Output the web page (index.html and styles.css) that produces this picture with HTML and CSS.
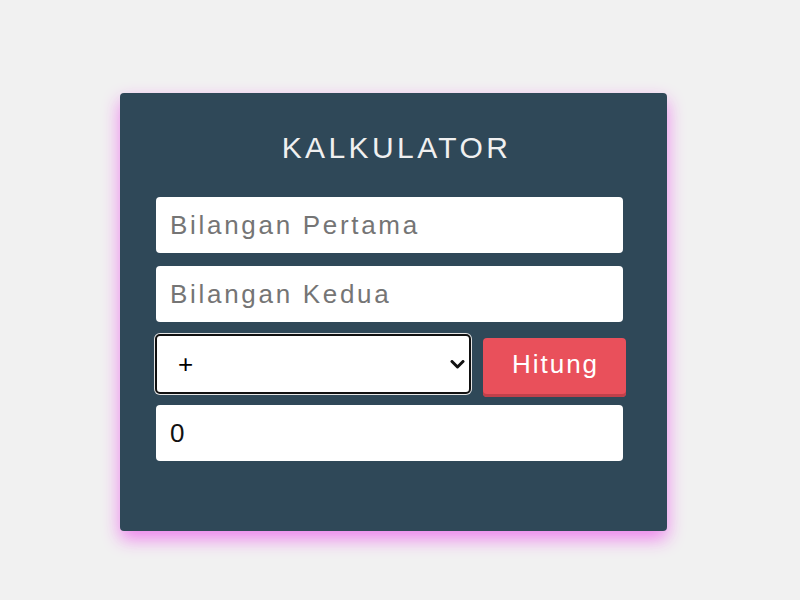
FILE: index.html
```html
<!DOCTYPE html>
<html>
<head>
<meta charset="utf-8">
<link rel="stylesheet" href="styles.css">
</head>
<body>
<div class="card">
  <h2 class="title">KALKULATOR</h2>
  <input class="field" type="text" placeholder="Bilangan Pertama">
  <input class="field" type="text" placeholder="Bilangan Kedua">
  <div class="row">
    <select class="op">
      <option>+</option>
      <option>-</option>
      <option>*</option>
      <option>/</option>
    </select>
    <button class="btn">Hitung</button>
  </div>
  <input class="field result" type="text" value="0">
</div>
</body>
</html>
```
FILE: styles.css
```css
html, body {
  margin: 0;
  padding: 0;
}
body {
  background: #f1f1f1;
  font-family: "Liberation Sans", Arial, sans-serif;
  padding: 93px 0 0 120px;
  height: 600px;
  box-sizing: border-box;
}
.card {
  width: 547px;
  height: 438px;
  box-sizing: border-box;
  background: #2f4858;
  border-radius: 4px;
  padding: 38px 0 0 36px;
  box-shadow: 0 8px 18px violet;
  display: flex;
  flex-direction: column;
}
.title {
  margin: 0 0 32px 0;
  padding-left: 3px;
  width: 475px;
  text-align: center;
  font-weight: normal;
  font-size: 30px;
  letter-spacing: 3.4px;
  line-height: 34px;
  color: #f0f0f0;
}
.field {
  width: 467px;
  height: 56px;
  box-sizing: border-box;
  border: none;
  border-radius: 4px;
  background: #fff;
  padding: 0 14px;
  font-family: "Liberation Sans", Arial, sans-serif;
  font-size: 26px;
  letter-spacing: 2.7px;
  color: #111;
  margin: 0 0 13px 0;
  outline: none;
}
.field::placeholder {
  color: #757575;
}
.row {
  display: flex;
  align-items: flex-start;
  margin: -2px 0 8px -1px;
}
.op {
  -webkit-appearance: none;
  appearance: none;
  width: 316px;
  height: 60px;
  box-sizing: border-box;
  border: 2px solid #111;
  border-radius: 5px;
  box-shadow: 0 0 0 1px #e6e6e6;
  background: #fff url("data:image/svg+xml,%3Csvg xmlns='http://www.w3.org/2000/svg' width='15' height='9' viewBox='0 0 15 9'%3E%3Cpath d='M2 1.5 L7.5 7 L13 1.5' fill='none' stroke='%23111' stroke-width='3' stroke-linecap='round' stroke-linejoin='round'/%3E%3C/svg%3E") no-repeat right 4px center;
  font-family: "Liberation Sans", Arial, sans-serif;
  font-size: 26px;
  color: #000;
  padding: 0 12px 0 21px;
  margin: 1px 0 0 0;
  outline: none;
}
.btn {
  margin: 5px 0 0 12px;
  width: 143px;
  height: 59px;
  box-sizing: border-box;
  border: none;
  border-radius: 4px;
  background: #e9505b;
  box-shadow: inset 0 -3px 0 #c0404a;
  color: #fff;
  font-family: "Liberation Sans", Arial, sans-serif;
  font-size: 26px;
  letter-spacing: 2px;
  padding: 0 0 6px 2px;
}
.result {
  margin: 0;
  letter-spacing: 0;
}
```
